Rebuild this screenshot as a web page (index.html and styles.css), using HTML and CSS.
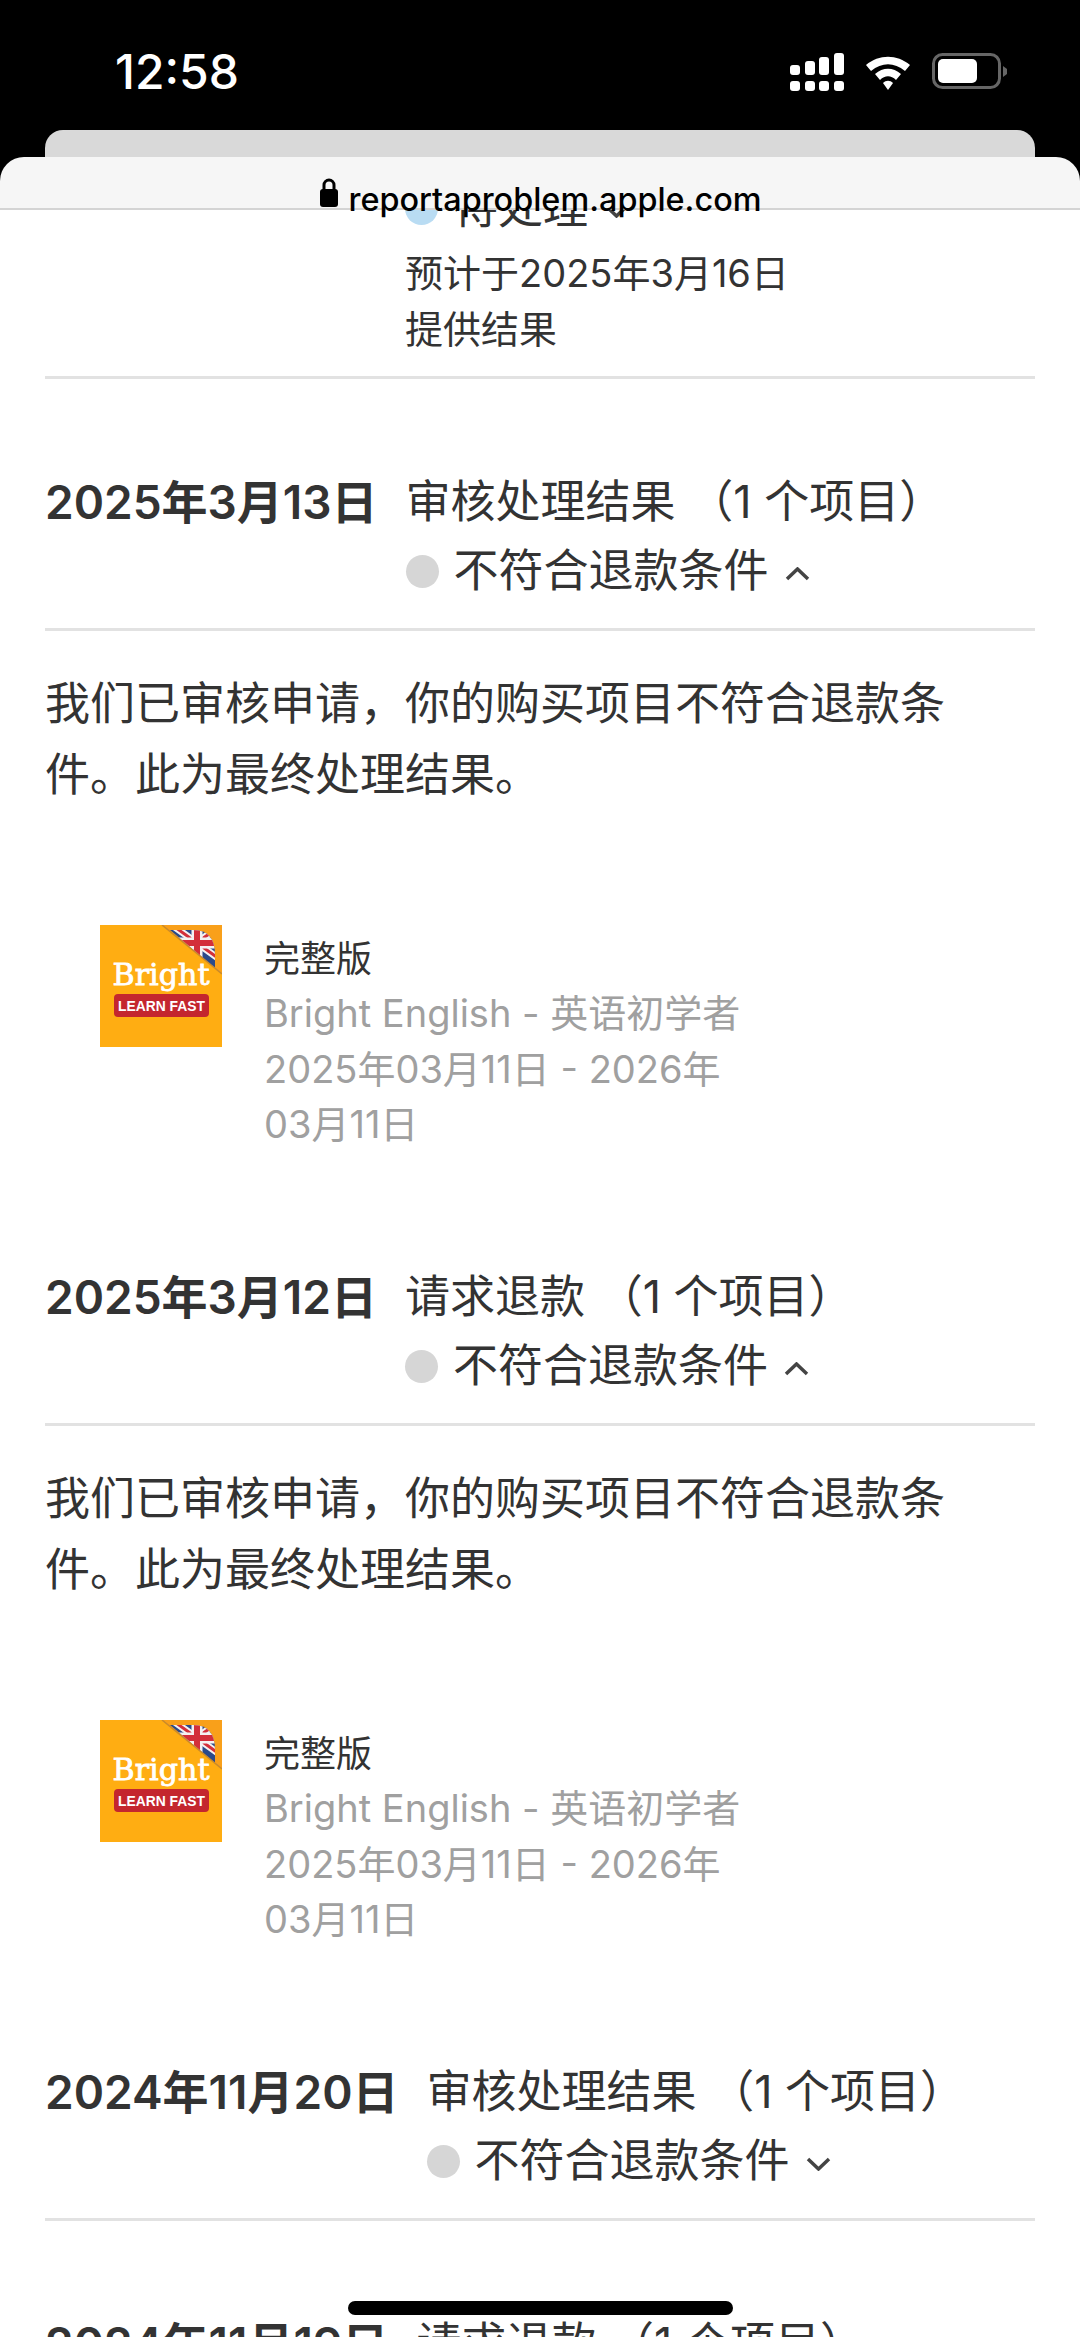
FILE: index.html
```html
<!DOCTYPE html>
<html lang="zh-CN">
<head>
    <meta charset="UTF-8">
    <meta name="viewport" content="width=device-width, initial-scale=1.0">
    <title>reportaproblem.apple.com</title>
    <link rel="stylesheet" href="styles.css">
</head>
<body>
    <!-- Phone status bar -->
    <div class="status-bar">
        <span class="time">12:58</span>
        <div class="status-icons">
            <svg width="54" height="38" viewBox="0 0 54 38">
                <g fill="#fff">
                    <rect x="0" y="12" width="10" height="10" rx="3"/>
                    <rect x="15" y="8" width="10" height="14" rx="3"/>
                    <rect x="29" y="4" width="10" height="18" rx="3"/>
                    <rect x="44" y="0" width="10" height="22" rx="3"/>
                    <rect x="0" y="28" width="10" height="10" rx="3"/>
                    <rect x="15" y="28" width="10" height="10" rx="3"/>
                    <rect x="29" y="28" width="10" height="10" rx="3"/>
                    <rect x="44" y="28" width="10" height="10" rx="3"/>
                </g>
            </svg>
            <svg class="wifi" width="46" height="36" viewBox="0 0 46 36">
                <path d="M1 10 C14 -1 32 -1 45 10 L40 16 C29 7 17 7 6 16 Z" fill="#fff"/>
                <path d="M10 19 C18 12 28 12 36 19 L31 25 C26 20 20 20 15 25 Z" fill="#fff"/>
                <path d="M18 28 C21 25 25 25 28 28 L23 35 Z" fill="#fff"/>
            </svg>
            <svg class="battery" width="75" height="38" viewBox="0 0 75 38">
                <rect x="1.500" y="1.500" width="66" height="33" rx="9" fill="none" stroke="#666" stroke-width="3"/>
                <rect x="6" y="6" width="39" height="24" rx="5" fill="#fff"/>
                <path d="M71 13 L75 16 V21 L71 24 Z" fill="#666"/>
            </svg>
        </div>
    </div>

    <!-- Browser chrome -->
    <div class="tab-behind"></div>
    <header class="url-bar">
        <svg width="20" height="31" viewBox="0 0 20 31">
            <path d="M5 13 V8 a5 5 0 0 1 10 0 V13" fill="none" stroke="#000" stroke-width="3"/>
            <rect x="1" y="12" width="18" height="18" rx="3" fill="#000"/>
        </svg>
        <span>reportaproblem.apple.com</span>
    </header>

    <main class="history">
        <section class="row row-first">
            <div class="row-date row-date-empty"></div>
            <div class="row-body">
                <div class="status">
                    <span class="dot dot-pending"></span>
                    <span>待处理</span>
                    <svg class="chevron" width="25" height="14" viewBox="0 0 25 14"><path d="M2 2 L12.500 12 L23 2"/></svg>
                </div>
                <p class="row-note">预计于2025年3月16日<br>提供结果</p>
            </div>
        </section>

        <section class="row">
            <div class="row-date">2025年3月13日</div>
            <div class="row-body">
                <div class="row-title">审核处理结果 （1 个项目）</div>
                <div class="status">
                    <span class="dot"></span>
                    <span>不符合退款条件</span>
                    <svg class="chevron" width="25" height="14" viewBox="0 0 25 14"><path d="M2 12 L12.500 2 L23 12"/></svg>
                </div>
            </div>
        </section>
        <div class="detail">
            <p class="detail-text">我们已审核申请，你的购买项目不符合退款条件。此为最终处理结果。</p>
            <div class="item">
                <svg class="app-icon" viewBox="0 0 122 122">
                    <defs>
                        <clipPath id="flag-clip"><path d="M70 5 H93 Q115 5 115 30 V43 Z"/></clipPath>
                    </defs>
                    <rect width="122" height="122" fill="#ffad12"/>
                    <path d="M62 0 H122 V49 Z" fill="#f9a01a"/>
                    <g clip-path="url(#flag-clip)">
                        <rect x="66" y="0" width="56" height="50" fill="#2a4a8a"/>
                        <path d="M72 0 L122 36 M122 0 L70 36" stroke="#f4f1f1" stroke-width="7"/>
                        <path d="M72 0 L122 36 M122 0 L70 36" stroke="#d32f3a" stroke-width="3"/>
                        <path d="M97 0 V40 M66 18 H122" stroke="#f4f1f1" stroke-width="11"/>
                        <path d="M97 0 V40 M66 18 H122" stroke="#d32f3a" stroke-width="6"/>
                    </g>
                    <path d="M62 0 L122 49" stroke="#c98a2c" stroke-width="1.500"/>
                    <text x="61" y="60" class="app-name" textLength="97" lengthAdjust="spacingAndGlyphs">Bright</text>
                    <rect x="14" y="69" width="95" height="23" rx="4" fill="#c4262e"/>
                    <text x="61.500" y="86" class="app-tag" textLength="87" lengthAdjust="spacingAndGlyphs">LEARN FAST</text>
                </svg>
                <div class="item-text">
                    <div class="item-plan">完整版</div>
                    <div>Bright English - 英语初学者</div>
                    <div>2025年03月11日 - 2026年<br>03月11日</div>
                </div>
            </div>
        </div>

        <section class="row">
            <div class="row-date">2025年3月12日</div>
            <div class="row-body">
                <div class="row-title">请求退款 （1 个项目）</div>
                <div class="status">
                    <span class="dot"></span>
                    <span>不符合退款条件</span>
                    <svg class="chevron" width="25" height="14" viewBox="0 0 25 14"><path d="M2 12 L12.500 2 L23 12"/></svg>
                </div>
            </div>
        </section>
        <div class="detail">
            <p class="detail-text">我们已审核申请，你的购买项目不符合退款条件。此为最终处理结果。</p>
            <div class="item">
                <svg class="app-icon" viewBox="0 0 122 122">
                    <rect width="122" height="122" fill="#ffad12"/>
                    <path d="M62 0 H122 V49 Z" fill="#f9a01a"/>
                    <g clip-path="url(#flag-clip)">
                        <rect x="66" y="0" width="56" height="50" fill="#2a4a8a"/>
                        <path d="M72 0 L122 36 M122 0 L70 36" stroke="#f4f1f1" stroke-width="7"/>
                        <path d="M72 0 L122 36 M122 0 L70 36" stroke="#d32f3a" stroke-width="3"/>
                        <path d="M97 0 V40 M66 18 H122" stroke="#f4f1f1" stroke-width="11"/>
                        <path d="M97 0 V40 M66 18 H122" stroke="#d32f3a" stroke-width="6"/>
                    </g>
                    <path d="M62 0 L122 49" stroke="#c98a2c" stroke-width="1.500"/>
                    <text x="61" y="60" class="app-name" textLength="97" lengthAdjust="spacingAndGlyphs">Bright</text>
                    <rect x="14" y="69" width="95" height="23" rx="4" fill="#c4262e"/>
                    <text x="61.500" y="86" class="app-tag" textLength="87" lengthAdjust="spacingAndGlyphs">LEARN FAST</text>
                </svg>
                <div class="item-text">
                    <div class="item-plan">完整版</div>
                    <div>Bright English - 英语初学者</div>
                    <div>2025年03月11日 - 2026年<br>03月11日</div>
                </div>
            </div>
        </div>

        <section class="row">
            <div class="row-date">2024年11月20日</div>
            <div class="row-body">
                <div class="row-title">审核处理结果 （1 个项目）</div>
                <div class="status">
                    <span class="dot"></span>
                    <span>不符合退款条件</span>
                    <svg class="chevron" width="25" height="14" viewBox="0 0 25 14"><path d="M2 2 L12.500 12 L23 2"/></svg>
                </div>
            </div>
        </section>

        <section class="row row-cut">
            <div class="row-date">2024年11月19日</div>
            <div class="row-body">
                <div class="row-title">请求退款 （1 个项目）</div>
            </div>
        </section>
    </main>

    <div class="home-indicator"></div>
</body>
</html>
```
FILE: styles.css
```css
* {
    box-sizing: border-box;
}

html, body {
    margin: 0;
    padding: 0;
}

body {
    position: relative;
    width: 1080px;
    height: 2337px;
    overflow: hidden;
    background-color: #000;
    font-family: Inter, "Noto Sans CJK SC", sans-serif;
    color: #333;
}

/* status bar */
.status-bar {
    height: 130px;
    padding: 50px 73px 0 115px;
    display: flex;
    justify-content: space-between;
    align-items: flex-start;
    color: #fff;
}

.time {
    font-size: 48px;
    font-weight: 500;
    line-height: 44px;
}

.status-icons {
    display: flex;
    align-items: flex-start;
    margin-top: 3px;
}

.wifi {
    margin-left: 21px;
    margin-top: 2px;
}

.battery {
    margin-left: 21px;
}

/* browser chrome */
.tab-behind {
    height: 27px;
    margin: 0 45px;
    background-color: #d9d9d9;
    border-radius: 18px 18px 0 0;
}

.url-bar {
    height: 53px;
    background-color: #f6f6f6;
    border-radius: 24px 24px 0 0;
    border-bottom: 2px solid #d4d4d4;
    display: flex;
    justify-content: center;
    align-items: flex-end;
    gap: 10px;
    color: #000;
    font-size: 32.400px;
    font-weight: 500;
    line-height: 40px;
    position: relative;
    z-index: 1;
}

.url-bar span {
    margin-bottom: -12px;
}

/* history list */
.history {
    height: 2127px;
    background-color: #fff;
    overflow: hidden;
    padding: 0 45px;
}

.row {
    display: flex;
    gap: 28px;
    padding: 88px 0 23px;
    border-bottom: 3px solid #e2e2e2;
}

.row-first {
    margin-top: -36px;
    padding: 0 0 19px;
}

.row-cut {
    border-bottom: 0;
}

.row-date {
    font-size: 46px;
    font-weight: 600;
    line-height: 70px;
    white-space: nowrap;
}

.row-date-empty {
    width: 332px;
}

.row-title, .status {
    font-size: 45px;
    line-height: 70px;
    white-space: nowrap;
}

.status {
    display: flex;
    align-items: center;
    line-height: 68px;
}

.dot {
    width: 33px;
    height: 33px;
    border-radius: 50%;
    background-color: #d6d6d6;
    margin-right: 15px;
}

.dot-pending {
    background-color: #b9dcf3;
}

.chevron {
    margin-left: 16px;
    margin-top: 6px;
}

.chevron path {
    fill: none;
    stroke: #444;
    stroke-width: 3.500;
}

.row-note {
    margin: 3px 0 0;
    font-size: 38px;
    line-height: 56px;
}

/* expanded detail below a row */
.detail {
    padding: 37px 0 21.500px;
}

.detail-text {
    margin: 0;
    width: 920px;
    font-size: 45px;
    line-height: 71px;
}

.item {
    display: flex;
    align-items: flex-start;
    gap: 42px;
    margin: 115px 0 0 55px;
}

.app-icon {
    width: 122px;
    height: 122px;
    flex: none;
}

.app-name {
    font-family: "DejaVu Serif", serif;
    font-size: 30px;
    fill: #fff;
    stroke: #fff;
    stroke-width: 0.800;
    text-anchor: middle;
}

.app-tag {
    font-family: "Liberation Sans", sans-serif;
    font-size: 15.500px;
    font-weight: 700;
    fill: #fff;
    text-anchor: middle;
}

.item-text {
    width: 480px;
    padding-top: 7px;
    font-size: 38px;
    line-height: 55.500px;
    color: #a0a0a0;
}

.item-plan {
    font-size: 36px;
    line-height: 54px;
    color: #333;
}

.home-indicator {
    position: absolute;
    left: 348px;
    top: 2301px;
    width: 385px;
    height: 14px;
    border-radius: 7px;
    background-color: #000;
}
```
